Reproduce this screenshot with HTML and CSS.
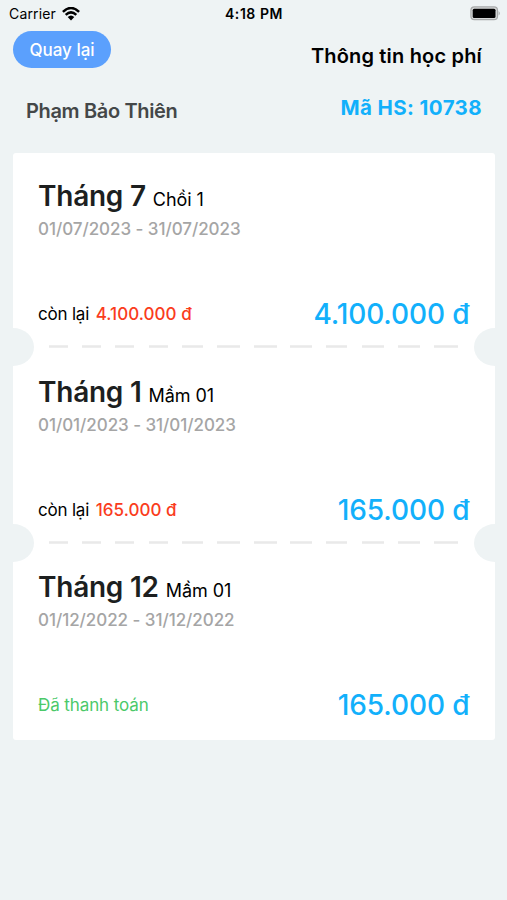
FILE: index.html
```html
<!DOCTYPE html>
<html lang="vi">
<head>
    <meta charset="UTF-8">
    <meta name="viewport" content="width=device-width, initial-scale=1.0">
    <title>Thông tin học phí</title>
    <link rel="stylesheet" href="styles.css">
</head>
<body>
    <div class="status-bar">
        <div class="carrier">
            <span>Carrier</span>
            <svg class="wifi" width="18" height="14" viewBox="0 0 18 14">
                <path d="M0.9 4.8 Q9 -2.8 17.1 4.8 M3.7 7.8 Q9 2.9 14.3 7.8" fill="none" stroke="#000" stroke-width="2.5"/>
                <path d="M5.7 10 Q9 7 12.3 10 L9 13.5 Z"/>
            </svg>
        </div>
        <span class="time">4:18 PM</span>
        <svg class="battery" width="31" height="15" viewBox="0 0 31 15">
            <rect x="0.9" y="0.9" width="26.6" height="12.8" rx="3.5" fill="#d6d8d8" stroke="#a7a9a9" stroke-width="1.2"/>
            <rect x="2.7" y="2.7" width="22.8" height="9.2" rx="1.5"/>
            <path d="M28.6 5 Q31 7.3 28.6 9.6 Z" fill="#a7a9a9"/>
        </svg>
    </div>

    <header class="header">
        <button class="back-btn" type="button">Quay lại</button>
        <h1>Thông tin học phí</h1>
    </header>

    <div class="student">
        <span class="student-name">Phạm Bảo Thiên</span>
        <span class="student-code">Mã HS: 10738</span>
    </div>

    <main class="tickets">
        <section class="ticket">
            <h2><span class="month">Tháng 7</span> <span class="class-name">Chồi 1</span></h2>
            <p class="dates">01/07/2023 - 31/07/2023</p>
            <div class="ticket-bottom">
                <p class="remain">còn lại <strong>4.100.000 đ</strong></p>
                <span class="amount">4.100.000 đ</span>
            </div>
            <svg class="tear" width="409" height="3" viewBox="0 0 409 3">
                <path d="M0 1.5 H409"/>
            </svg>
        </section>

        <section class="ticket">
            <h2><span class="month">Tháng 1</span> <span class="class-name">Mầm 01</span></h2>
            <p class="dates">01/01/2023 - 31/01/2023</p>
            <div class="ticket-bottom">
                <p class="remain">còn lại <strong>165.000 đ</strong></p>
                <span class="amount">165.000 đ</span>
            </div>
            <svg class="tear" width="409" height="3" viewBox="0 0 409 3">
                <path d="M0 1.5 H409"/>
            </svg>
        </section>

        <section class="ticket">
            <h2><span class="month">Tháng 12</span> <span class="class-name">Mầm 01</span></h2>
            <p class="dates">01/12/2022 - 31/12/2022</p>
            <div class="ticket-bottom">
                <p class="paid">Đã thanh toán</p>
                <span class="amount">165.000 đ</span>
            </div>
        </section>
    </main>
</body>
</html>
```
FILE: styles.css
```css
* {
    box-sizing: border-box;
}
body {
    font-family: Inter, Roboto, sans-serif;
    margin: 0;
    min-height: 900px;
    background-color: #eef3f4;
    color: #000;
}
h1, h2, p {
    margin: 0;
}
.status-bar {
    display: grid;
    grid-template-columns: 1fr auto 1fr;
    align-items: center;
    height: 27px;
    padding: 0 6px 0 9px;
    font-size: 14px;
}
.carrier {
    display: flex;
    align-items: center;
    gap: 6px;
    letter-spacing: 0.15px;
}
.time {
    font-weight: 600;
    letter-spacing: 0.55px;
    margin-right: 2px;
}
.battery {
    justify-self: end;
}
.header {
    display: flex;
    justify-content: space-between;
    align-items: flex-start;
    padding: 4px 25px 0 13px;
    height: 63px;
}
.back-btn {
    width: 98px;
    height: 37px;
    padding: 0;
    border: none;
    border-radius: 19px;
    background-color: #5ba0fd;
    color: #fff;
    font-family: inherit;
    font-size: 17px;
    font-weight: 500;
}
h1 {
    padding-top: 12px;
    font-size: 20px;
    line-height: 26px;
    font-weight: 600;
    letter-spacing: 0.18px;
}
.student {
    display: flex;
    justify-content: space-between;
    height: 63px;
    padding: 5px 25px 0 26px;
    font-size: 20px;
    line-height: 26px;
}
.student-name {
    padding-top: 3px;
    color: #444748;
    font-weight: 600;
    letter-spacing: -0.35px;
}
.student-code {
    color: #12b0fb;
    font-size: 20.5px;
    font-weight: 750;
    letter-spacing: 0.4px;
}
.tickets {
    margin: 0 12.5px;
}
.ticket {
    position: relative;
    height: 195.6px;
    padding: 25px 25px 0 25.5px;
    background-color: #fff;
}
.ticket:first-child {
    border-radius: 3px 3px 0 0;
}
.ticket:last-child {
    border-radius: 0 0 3px 3px;
}
.ticket h2 {
    display: flex;
    align-items: baseline;
    gap: 7px;
    height: 40px;
    line-height: 37px;
}
.month {
    color: #1d1f1f;
    font-size: 28px;
    font-weight: 600;
    letter-spacing: -0.25px;
}
.class-name {
    font-size: 18px;
    font-weight: 400;
    letter-spacing: -0.05px;
}
.dates {
    color: #a5a5a5;
    font-size: 17px;
    font-weight: 450;
    line-height: 22px;
    letter-spacing: -0.05px;
}
.ticket-bottom {
    display: flex;
    justify-content: space-between;
    align-items: center;
    margin-top: 54px;
    height: 40px;
    font-size: 17px;
}
.remain {
    letter-spacing: -0.2px;
}
.remain strong {
    margin-left: 2px;
    color: #fa3c1d;
    font-weight: 500;
    letter-spacing: 0.05px;
}
.paid {
    color: #4bc969;
    letter-spacing: -0.1px;
}
.amount {
    color: #12b0fb;
    font-size: 28px;
    font-weight: 550;
    letter-spacing: -0.1px;
}
.tear {
    display: block;
    margin: 11px 0 0 11px;
}
.tear path {
    stroke: #e9e9e9;
    stroke-width: 2.5;
    stroke-dasharray: 19 14 19 14 19 15 19 14 21 14 23 14 23 13 22 14 21 15 22 14 22 14 24 0;
}
/* round notches at both ends of the tear line */
.ticket:not(:last-child)::before,
.ticket:not(:last-child)::after {
    content: "";
    position: absolute;
    z-index: 1;
    bottom: -17.5px;
    width: 21px;
    height: 38px;
    background-color: #eef3f4;
}
.ticket::before {
    left: 0;
    border-radius: 0 21px 21px 0 / 0 19px 19px 0;
}
.ticket::after {
    right: 0;
    border-radius: 21px 0 0 21px / 19px 0 0 19px;
}
```
